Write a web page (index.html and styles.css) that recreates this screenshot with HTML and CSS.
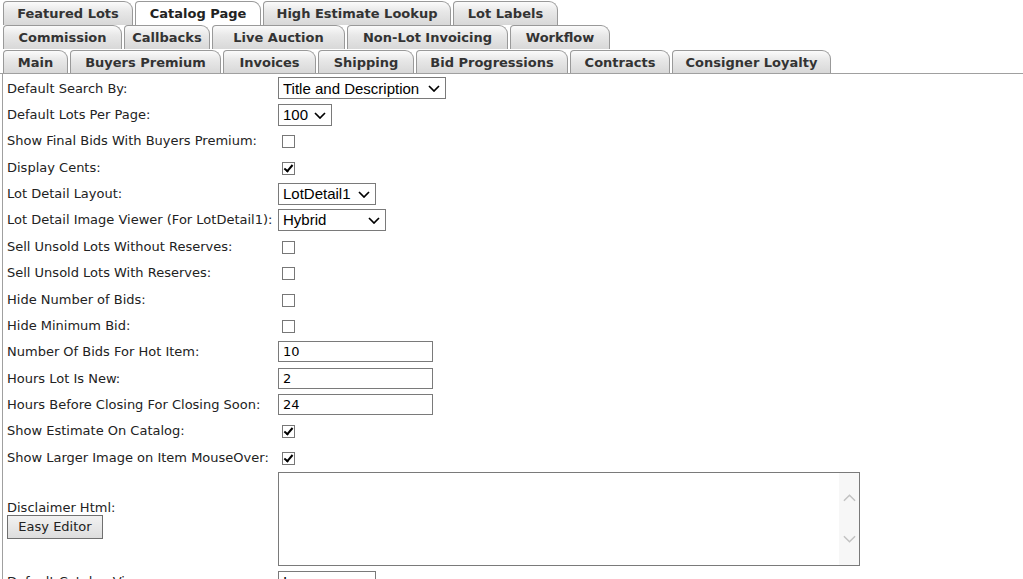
FILE: index.html
```html
<!DOCTYPE html>
<html lang="en">
<head>
  <meta charset="UTF-8" />
  <title>Catalog Page Settings</title>
  <link rel="stylesheet" href="styles.css">
</head>
<body>
  <!-- tab rows -->
  <div class="tabs">
    <div class="tab-row">
      <a class="tab" style="width:130px">Featured Lots</a>
      <a class="tab active" style="width:126px">Catalog Page</a>
      <a class="tab" style="width:188px">High Estimate Lookup</a>
      <a class="tab" style="width:105px">Lot Labels</a>
    </div>
    <div class="tab-row">
      <a class="tab" style="width:119px">Commission</a>
      <a class="tab" style="width:86px">Callbacks</a>
      <a class="tab" style="width:133px">Live Auction</a>
      <a class="tab" style="width:161px">Non-Lot Invoicing</a>
      <a class="tab" style="width:100px">Workflow</a>
    </div>
    <div class="tab-row last">
      <a class="tab" style="width:65px">Main</a>
      <a class="tab" style="width:151px">Buyers Premium</a>
      <a class="tab" style="width:93px">Invoices</a>
      <a class="tab" style="width:96px">Shipping</a>
      <a class="tab" style="width:152px">Bid Progressions</a>
      <a class="tab" style="width:100px">Contracts</a>
      <a class="tab" style="width:159px">Consigner Loyalty</a>
    </div>
  </div>

  <!-- settings -->
  <div class="panel">
    <div class="form">
      <label>Default Search By:</label>
      <div><span class="select" style="width:168px"><select><option>Title and Description</option></select><svg viewBox="0 0 12 7"><path d="M1 1 L6 6 L11 1" /></svg></span></div>

      <label>Default Lots Per Page:</label>
      <div><span class="select" style="width:54px"><select><option>100</option></select><svg viewBox="0 0 12 7"><path d="M1 1 L6 6 L11 1" /></svg></span></div>

      <label>Show Final Bids With Buyers Premium:</label>
      <div><input type="checkbox" class="check"></div>

      <label>Display Cents:</label>
      <div><input type="checkbox" class="check" checked></div>

      <label>Lot Detail Layout:</label>
      <div><span class="select" style="width:98px"><select><option>LotDetail1</option></select><svg viewBox="0 0 12 7"><path d="M1 1 L6 6 L11 1" /></svg></span></div>

      <label>Lot Detail Image Viewer (For LotDetail1):</label>
      <div><span class="select" style="width:108px"><select><option>Hybrid</option></select><svg viewBox="0 0 12 7"><path d="M1 1 L6 6 L11 1" /></svg></span></div>

      <label>Sell Unsold Lots Without Reserves:</label>
      <div><input type="checkbox" class="check"></div>

      <label>Sell Unsold Lots With Reserves:</label>
      <div><input type="checkbox" class="check"></div>

      <label>Hide Number of Bids:</label>
      <div><input type="checkbox" class="check"></div>

      <label>Hide Minimum Bid:</label>
      <div><input type="checkbox" class="check"></div>

      <label>Number Of Bids For Hot Item:</label>
      <div><input type="text" class="text" value="10"></div>

      <label>Hours Lot Is New:</label>
      <div><input type="text" class="text" value="2"></div>

      <label>Hours Before Closing For Closing Soon:</label>
      <div><input type="text" class="text" value="24"></div>

      <label>Show Estimate On Catalog:</label>
      <div><input type="checkbox" class="check" checked></div>

      <label>Show Larger Image on Item MouseOver:</label>
      <div><input type="checkbox" class="check" checked></div>

      <div class="tall-label">
        <label>Disclaimer Html:</label>
        <button class="btn">Easy Editor</button>
      </div>
      <div class="tall">
        <div class="memo">
          <textarea></textarea>
          <div class="scroll">
            <svg viewBox="0 0 14 8"><path d="M1 7 L7 1 L13 7" /></svg>
            <svg viewBox="0 0 14 8"><path d="M1 1 L7 7 L13 1" /></svg>
          </div>
        </div>
      </div>

      <label>Default Catalog View:</label>
      <div><span class="select" style="width:98px"><select><option>Image</option></select><svg viewBox="0 0 12 7"><path d="M1 1 L6 6 L11 1" /></svg></span></div>
    </div>
  </div>
</body>
</html>
```

FILE: styles.css
```css
body {
  margin: 0;
  padding: 0;
  background: #fff;
  color: #222;
  font-family: "DejaVu Sans", Verdana, sans-serif;
  font-size: 13px;
  overflow: hidden;
}

/* Вкладки */
.tabs {
  padding-top: 1px;
}

.tab-row {
  display: flex;
  gap: 2px;
  padding-left: 3px;
  height: 24px;
  align-items: flex-end;
}

.tab-row.last {
  border-bottom: 1px solid #a0a0a0;
}

.tab {
  display: block;
  flex: none;
  box-sizing: border-box;
  height: 24px;
  border: 1px solid #999;
  border-bottom: none;
  border-radius: 4px 9px 0 0;
  background: linear-gradient(#fbfbfb, #e8e8e8 40%, #d8d8d8);
  color: #333;
  font-weight: bold;
  font-size: 13px;
  line-height: 23px;
  text-align: center;
  white-space: nowrap;
}

.tab.active {
  background: #fff;
  color: #222;
}

.tab-row.last .tab {
  height: 23px;
  line-height: 23px;
}

/* Панель настроек */
.panel {
  margin-left: 2px;
  border-left: 1px solid #a0a0a0;
  padding: 1px 0 0 4px;
}

.form {
  display: grid;
  grid-template-columns: 271px 1fr;
  grid-template-rows: repeat(15, 26.36px) 98px;
  grid-auto-rows: 26.36px;
  align-items: center;
}

.form label {
  white-space: nowrap;
}

.select {
  position: relative;
  display: inline-block;
  box-sizing: border-box;
  height: 22px;
  border: 1px solid #7a7a7a;
  vertical-align: middle;
}

.select select {
  appearance: none;
  -webkit-appearance: none;
  border: none;
  outline: none;
  background: transparent;
  width: 100%;
  height: 20px;
  padding: 0 0 0 4px;
  margin: 0;
  font-family: "Liberation Sans", Arial, sans-serif;
  font-size: 15px;
  color: #000;
}

.select svg {
  position: absolute;
  right: 5px;
  top: 7px;
  width: 12px;
  height: 7px;
  fill: none;
  stroke: #000;
  stroke-width: 1.7;
}

.check {
  appearance: none;
  -webkit-appearance: none;
  position: relative;
  box-sizing: border-box;
  width: 13px;
  height: 13px;
  margin: 0 0 0 4px;
  border: 1px solid #777;
  background: #fff;
  vertical-align: middle;
}

.check:checked::after {
  content: "";
  position: absolute;
  left: 3px;
  top: 0px;
  width: 3px;
  height: 7px;
  border-right: 2px solid #000;
  border-bottom: 2px solid #000;
  transform: rotate(40deg);
}

.text {
  box-sizing: border-box;
  width: 155px;
  height: 21px;
  margin: 0;
  border: 1px solid #7a7a7a;
  padding: 0 4px;
  font-family: "DejaVu Sans", Verdana, sans-serif;
  font-size: 13px;
  color: #000;
  vertical-align: middle;
}

.tall-label {
  display: flex;
  flex-direction: column;
  justify-content: center;
}

.tall {
  display: flex;
  align-items: center;
}

.btn {
  align-self: flex-start;
  width: 96px;
  height: 24px;
  border: 1px solid #707070;
  background: linear-gradient(#f2f2f2, #dddddd);
  font-family: "DejaVu Sans", Verdana, sans-serif;
  font-size: 13px;
  color: #222;
  padding: 0;
}

.memo {
  display: flex;
  box-sizing: border-box;
  width: 582px;
  height: 94px;
  border: 1px solid #7a7a7a;
}

.memo textarea {
  flex: 1;
  border: none;
  outline: none;
  resize: none;
  margin: 0;
}

.scroll {
  width: 20px;
  background: #f7f7f7;
  display: flex;
  flex-direction: column;
  justify-content: space-between;
  align-items: center;
  padding: 21px 0 22px;
}

.scroll svg {
  width: 13px;
  height: 8px;
  fill: none;
  stroke: #c2c2c2;
  stroke-width: 1.6;
}
```
